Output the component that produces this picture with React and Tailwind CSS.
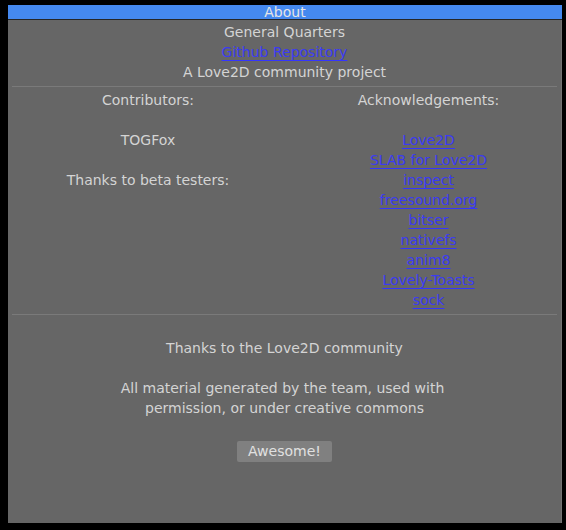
import React from "react";

const font = { fontFamily: '"DejaVu Sans", "Liberation Sans", sans-serif' };

function L({ children }) {
  return (
    <div className="h-[20px] leading-[20px]">
      <span className="text-[#3b3bf2] underline decoration-[#3535ff] underline-offset-[3px]">{children}</span>
    </div>
  );
}

function T({ children, className = "" }) {
  return <div className={"h-[20px] leading-[20px] text-[#d4d4d4] " + className}>{children}</div>;
}

const Blank = () => <div className="h-[20px]" />;

export default function App() {
  return (
    <div className="w-[566px] h-[530px] bg-black pt-[5px] pl-[8px] text-[14px]" style={font}>
      <div className="w-[554px] h-[518px] flex flex-col">
        <div className="h-[14px] leading-[14px] bg-[#4589ef] text-center text-[#e6e6e6]">About</div>
        <div className="h-[1px] bg-[#262626]" />
        <div className="flex-1 bg-[#666666] border-r border-[#737373] flex flex-col text-center pt-[2px]">
          <T>General Quarters</T>
          <L>Github Repository</L>
          <T>A Love2D community project</T>
          <div className="mx-[4px] mt-[4px] h-[1px] bg-[#7a7a7a]" />
          <div className="flex mt-[3px]">
            <div className="w-[280px] flex flex-col">
              <T>Contributors:</T>
              <Blank />
              <T>TOGFox</T>
              <Blank />
              <T>Thanks to beta testers:</T>
            </div>
            <div className="flex-1 pl-[8px] flex flex-col">
              <T>Acknowledgements:</T>
              <Blank />
              <L>Love2D</L>
              <L>SLAB for Love2D</L>
              <L>inspect</L>
              <L>freesound.org</L>
              <L>bitser</L>
              <L>nativefs</L>
              <L>anim8</L>
              <L>Lovely-Toasts</L>
              <L>sock</L>
            </div>
          </div>
          <div className="mx-[4px] mt-[4px] h-[1px] bg-[#7a7a7a]" />
          <div className="h-[23px]" />
          <T>Thanks to the Love2D community</T>
          <Blank />
          <T className="pr-[4px]">All material generated by the team, used with</T>
          <T>permission, or under creative commons</T>
          <div className="flex justify-center mt-[23px]">
            <div className="w-[95px] h-[21px] leading-[21px] bg-[#808080] rounded-[2px] text-[#e0e0e0]">Awesome!</div>
          </div>
        </div>
      </div>
    </div>
  );
}
